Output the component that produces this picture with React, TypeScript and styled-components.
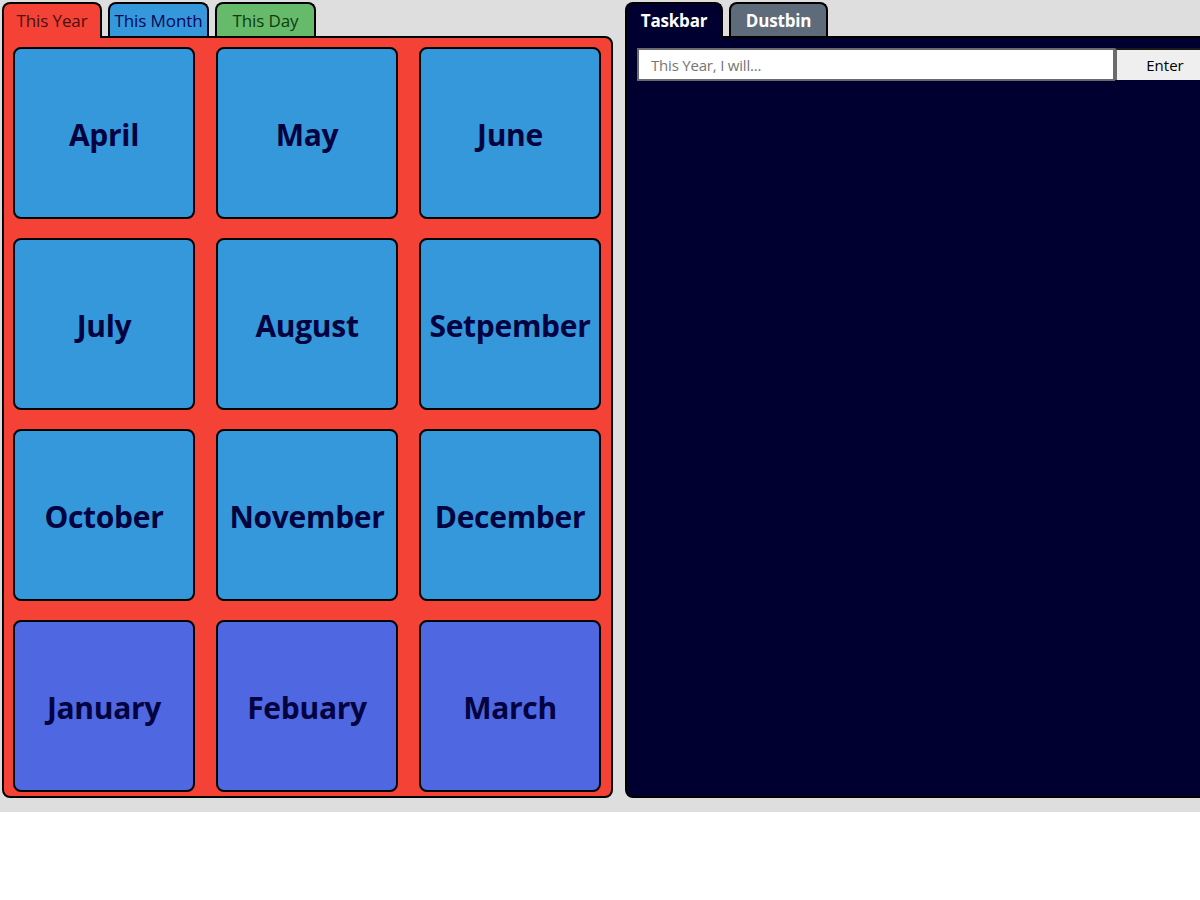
import React from "react";
import styled, { createGlobalStyle } from "styled-components";

const Global = createGlobalStyle`
  html, body { margin: 0; padding: 0; overflow: hidden; background: #ffffff; }
  body { font-family: "Open Sans", "Noto Sans", sans-serif; }
  * { box-sizing: border-box; }
`;

const Page = styled.div`
  display: flex;
  gap: 12px;
  align-items: flex-start;
  background: #dedede;
  padding: 2px 0 14px 2px;
  width: 1260px;
`;

const Column = styled.div<{ $w: number }>`
  display: flex;
  flex-direction: column;
  width: ${(p) => p.$w}px;
  flex-shrink: 0;
`;

const TabRow = styled.div`
  display: flex;
  gap: 6px;
  height: 34px;
  align-items: flex-start;
`;

const Tab = styled.div<{ $bg: string; $fg: string; $active?: boolean; $bold?: boolean; $w: number }>`
  width: ${(p) => p.$w}px;
  height: ${(p) => (p.$active ? 36 : 34)}px;
  position: relative;
  z-index: ${(p) => (p.$active ? 2 : 0)};
  background: ${(p) => p.$bg};
  color: ${(p) => p.$fg};
  border: 2px solid #000;
  border-bottom: none;
  border-radius: 8px 8px 0 0;
  display: flex;
  align-items: center;
  justify-content: center;
  padding-bottom: ${(p) => (p.$active ? 2 : 0)}px;
  font-size: 17px;
  font-weight: ${(p) => (p.$bold ? 700 : 400)};
  letter-spacing: ${(p) => (p.$bold ? "-0.2px" : "-0.1px")};
  white-space: nowrap;
`;

const Panel = styled.div<{ $bg: string; $h: number }>`
  background: ${(p) => p.$bg};
  border: 2px solid #000;
  border-radius: 0 8px 8px 8px;
  height: ${(p) => p.$h}px;
`;

const MonthGrid = styled.div`
  display: grid;
  grid-template-columns: repeat(3, 1fr);
  grid-template-rows: repeat(4, 172px);
  column-gap: 21px;
  row-gap: 19px;
  padding: 9px 10px 5px 9px;
`;

const Month = styled.div<{ $bg: string }>`
  background: ${(p) => p.$bg};
  border: 2px solid #000;
  border-radius: 8px;
  display: flex;
  align-items: center;
  justify-content: center;
  padding-top: 2px;
  font-size: 30px;
  font-weight: 700;
  letter-spacing: -0.3px;
  color: #03033f;
  white-space: nowrap;
`;

const InputRow = styled.div`
  display: flex;
  padding: 10px 0 0 10px;
`;

const TextInput = styled.input`
  width: 478px;
  height: 33px;
  border: 2px solid #6b6b6b;
  background: #fff;
  padding: 0 12px;
  font-family: "Open Sans", "Noto Sans", sans-serif;
  font-size: 15px;
  letter-spacing: -0.2px;
  color: #333;
  outline: none;
  &::placeholder { color: #757575; }
`;

const EnterButton = styled.button`
  width: 98px;
  height: 32px;
  background: #efefef;
  border: none;
  border-top: 2px solid #1a1a1a;
  border-left: 2px solid #6b6b6b;
  font-family: "Open Sans", "Noto Sans", sans-serif;
  font-size: 15px;
  color: #000;
  padding: 0;
`;

const months: [string, string][] = [
  ["April", "#3498db"],
  ["May", "#3498db"],
  ["June", "#3498db"],
  ["July", "#3498db"],
  ["August", "#3498db"],
  ["Setpember", "#3498db"],
  ["October", "#3498db"],
  ["November", "#3498db"],
  ["December", "#3498db"],
  ["January", "#4f67e0"],
  ["Febuary", "#4f67e0"],
  ["March", "#4f67e0"],
];

export default function App() {
  return (
    <>
      <Global />
      <Page>
        <Column $w={611}>
          <TabRow>
            <Tab $w={100} $bg="#f44336" $fg="#4a0f0f" $active>
              This Year
            </Tab>
            <Tab $w={101} $bg="#3498db" $fg="#05055a">
              This Month
            </Tab>
            <Tab $w={101} $bg="#66bb6a" $fg="#0f3a12">
              This Day
            </Tab>
          </TabRow>
          <Panel $bg="#f44336" $h={762}>
            <MonthGrid>
              {months.map(([m, c]) => (
                <Month key={m} $bg={c}>
                  {m}
                </Month>
              ))}
            </MonthGrid>
          </Panel>
        </Column>
        <Column $w={620}>
          <TabRow>
            <Tab $w={98} $bg="#000030" $fg="#ffffff" $active $bold>
              Taskbar
            </Tab>
            <Tab $w={99} $bg="#5d6b7b" $fg="#ffffff" $bold>
              Dustbin
            </Tab>
          </TabRow>
          <Panel $bg="#000030" $h={762}>
            <InputRow>
              <TextInput placeholder="This Year, I will..." />
              <EnterButton>Enter</EnterButton>
            </InputRow>
          </Panel>
        </Column>
      </Page>
    </>
  );
}
